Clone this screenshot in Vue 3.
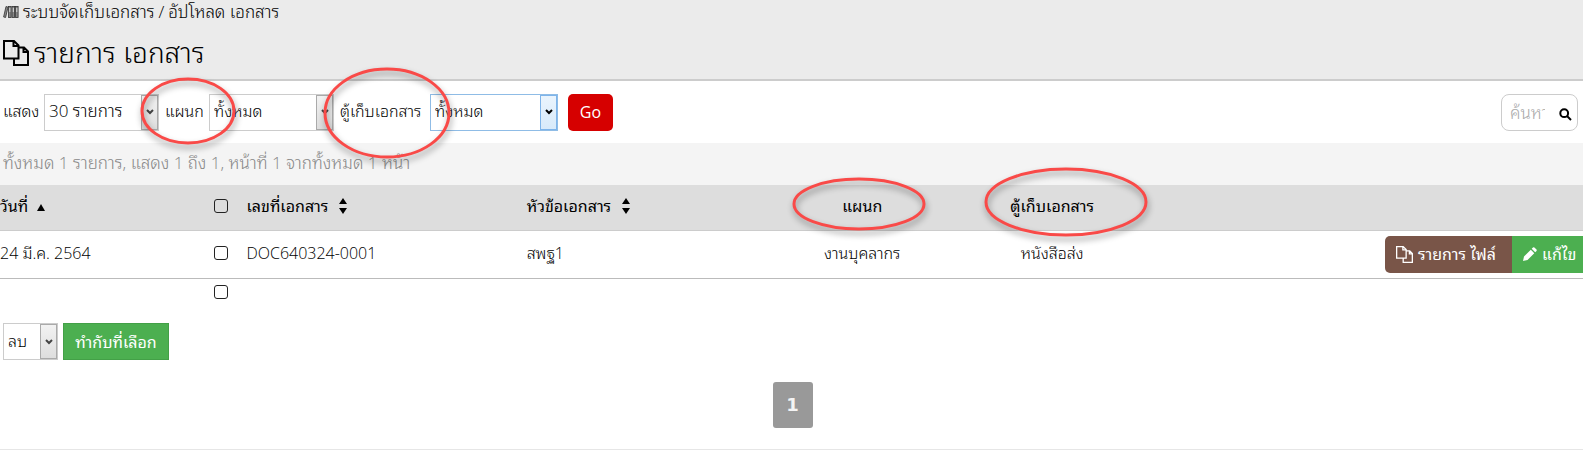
<script setup>
import { ref } from 'vue'

const pageSize = ref('30 รายการ')
const department = ref('ทั้งหมด')
const cabinet = ref('ทั้งหมด')
const action = ref('ลบ')
const query = ref('')
</script>

<template>
  <div class="page">
    <header class="head">
      <nav class="crumbs">
        <svg class="binders" viewBox="0 0 16 14" aria-hidden="true">
          <g fill="#888" stroke="#333" stroke-width="0.8">
            <path d="M3 1.5L5 2.2L2.6 12.5L.6 12Z" />
            <rect x="5.5" y="1.5" width="2.6" height="11" />
            <rect x="9" y="1.5" width="2.6" height="11" />
            <rect x="12.5" y="1.5" width="2.6" height="11" />
          </g>
          <path d="M6.8 3v4M10.3 3v4M13.8 3v4" stroke="#ddd" stroke-width="1" />
        </svg>
        <a href="#">ระบบจัดเก็บเอกสาร</a>
        <span>/</span>
        <a href="#">อัปโหลด เอกสาร</a>
      </nav>
      <h1 class="title">
        <svg class="files" viewBox="0 0 26 26" aria-hidden="true">
          <path d="M15.5 18.5H1V1H11L15.5 5.500V18.5ZM10.500 1V6H15.5M15.5 7.500H21L25 11.500V25H11V18.500M20.500 7.500V12H25" />
        </svg>
        <span>รายการ เอกสาร</span>
      </h1>
    </header>

    <form class="toolbar" @submit.prevent>
      <label class="w-show" for="size">แสดง</label>
      <span class="pick size">
        <select id="size" v-model="pageSize"><option>30 รายการ</option></select>
        <i><svg viewBox="0 0 8 6"><path d="M1 1L4 4L7 1" /></svg></i>
      </span>
      <label class="w-dept" for="dept">แผนก</label>
      <span class="pick dept">
        <select id="dept" v-model="department"><option>ทั้งหมด</option></select>
        <i><svg viewBox="0 0 8 6"><path d="M1 1L4 4L7 1" /></svg></i>
      </span>
      <label class="w-cab" for="cab">ตู้เก็บเอกสาร</label>
      <span class="pick cab active">
        <select id="cab" v-model="cabinet"><option>ทั้งหมด</option></select>
        <i><svg viewBox="0 0 8 6"><path d="M1 1L4 4L7 1" /></svg></i>
      </span>
      <button class="go" type="submit">Go</button>
      <span class="search">
        <input v-model="query" type="text" placeholder="ค้นหา" aria-label="ค้นหา" />
        <button type="button" aria-label="ค้นหา">
          <svg viewBox="0 0 13 13"><circle cx="5.200" cy="5.200" r="3.900" /><path d="M8 8L12 12" /></svg>
        </button>
      </span>
    </form>

    <p class="summary">ทั้งหมด 1 รายการ, แสดง 1 ถึง 1, หน้าที่ 1 จากทั้งหมด 1 หน้า</p>

    <table class="list">
      <colgroup>
        <col class="c-date" /><col class="c-check" /><col class="c-no" /><col class="c-topic" />
        <col class="c-dept" /><col class="c-cab" /><col />
      </colgroup>
      <thead>
        <tr>
          <th class="first">วันที่ <svg class="up" viewBox="0 0 8 8"><path d="M4 0L8 7H0Z" /></svg></th>
          <th class="mid"><input type="checkbox" aria-label="เลือก" /></th>
          <th><span class="sortable">เลขที่เอกสาร <svg class="sort" viewBox="0 0 8 16"><path d="M4 0L8 6H0ZM4 16L8 10H0Z" /></svg></span></th>
          <th><span class="sortable">หัวข้อเอกสาร <svg class="sort" viewBox="0 0 8 16"><path d="M4 0L8 6H0ZM4 16L8 10H0Z" /></svg></span></th>
          <th class="mid">แผนก</th>
          <th class="mid">ตู้เก็บเอกสาร</th>
          <th></th>
        </tr>
      </thead>
      <tbody>
        <tr>
          <td class="first">24 มี.ค. 2564</td>
          <td class="mid"><input type="checkbox" aria-label="เลือก" /></td>
          <td>DOC640324-0001</td>
          <td>สพฐ1</td>
          <td class="mid">งานบุคลากร</td>
          <td class="mid">หนังสือส่ง</td>
          <td class="acts">
            <div class="group">
              <a class="brown" href="#">
                <svg class="files" viewBox="0 0 26 26" aria-hidden="true">
                  <path d="M15.5 18.5H1V1H11L15.5 5.500V18.5ZM10.500 1V6H15.5M15.5 7.500H21L25 11.500V25H11V18.500M20.500 7.500V12H25" />
                </svg>
                <span>รายการ ไฟล์</span>
              </a>
              <a class="green" href="#">
                <svg class="pencil" viewBox="0 0 14 14" aria-hidden="true">
                  <path d="M0 14L1 9.500L7.800 2.700L11.300 6.200L4.500 13ZM8.700 1.800L10 .5Q10.700 0 11.400 .5L13.500 2.600Q14 3.300 13.500 4L12.200 5.300Z" />
                </svg>
                <span>แก้ไข</span>
              </a>
            </div>
          </td>
        </tr>
      </tbody>
      <tfoot>
        <tr>
          <td></td>
          <td class="mid"><input type="checkbox" aria-label="เลือก" /></td>
          <td colspan="5"></td>
        </tr>
      </tfoot>
    </table>

    <form class="bulk" @submit.prevent>
      <span class="pick act">
        <select v-model="action" aria-label="ทำกับที่เลือก"><option>ลบ</option></select>
        <i><svg viewBox="0 0 8 6"><path d="M1 1L4 4L7 1" /></svg></i>
      </span>
      <button type="submit">ทำกับที่เลือก</button>
    </form>

    <nav class="pager"><a href="#">1</a></nav>

    <svg class="marks" width="1200" height="260" aria-hidden="true">
      <ellipse cx="188" cy="111" rx="46" ry="32" />
      <ellipse cx="387" cy="113" rx="62" ry="44" />
      <ellipse cx="859" cy="204" rx="65" ry="25" />
      <ellipse cx="1066" cy="202" rx="80" ry="33" />
    </svg>
  </div>
</template>

<style>
body {
  margin: 0;
  background: #fff;
}
</style>

<style scoped>
.page {
  position: relative;
  overflow: hidden;
  border-bottom: 1px solid #e6e6e6;
  font: 300 16px/24px "Open Sans", "Noto Sans Thai Looped", "Noto Looped Thai", Loma, Garuda, "Noto Sans Thai", "Noto Sans", sans-serif;
  color: #000;
}
.page * {
  box-sizing: border-box;
}
a {
  color: inherit;
  text-decoration: none;
}
select,
input,
button {
  font: inherit;
  color: inherit;
}
.head {
  background: #ebebeb;
  border-bottom: 2px solid #ccc;
  padding: 0 3px 10px;
}
.crumbs {
  display: flex;
  align-items: center;
  gap: 4px;
  height: 24px;
  font-size: 17px;
}
.binders {
  width: 16px;
  height: 14px;
}
.title {
  display: flex;
  align-items: center;
  gap: 5px;
  height: 45px;
  padding-top: 12px;
  margin: 0;
  font-size: 28px;
  font-weight: 300;
  line-height: 33px;
}
.files {
  width: 26px;
  height: 26px;
  flex: none;
  fill: none;
  stroke: currentColor;
  stroke-width: 2;
}
.toolbar {
  display: flex;
  align-items: center;
  height: 62px;
  padding: 0 5px 0 3px;
  white-space: nowrap;
}
.toolbar label {
  padding-bottom: 2px;
}
.w-show {
  width: 41px;
}
.toolbar .w-dept {
  width: 50px;
  padding-left: 6px;
}
.toolbar .w-cab {
  width: 96px;
  padding-left: 6px;
}
.pick {
  position: relative;
  display: flex;
  height: 37px;
  border: 1px solid #ccc;
  background: #fff;
}
.pick select {
  appearance: none;
  flex: 1;
  width: 100%;
  border: 0;
  background: none;
  padding: 0 4px 2px;
  outline: 0;
}
.pick i {
  position: absolute;
  top: 0;
  right: 0;
  bottom: 0;
  width: 17px;
  display: grid;
  place-items: center;
  border: 1px solid #aaa;
  background: linear-gradient(#f2f2f2, #dedede);
  pointer-events: none;
}
.pick i svg {
  width: 8px;
  height: 6px;
  fill: none;
  stroke: #444;
  stroke-width: 2;
}
.size {
  width: 115px;
}
.size select {
  font-size: 17px;
}
.dept {
  width: 125px;
}
.cab {
  width: 128px;
}
.active {
  border-color: #8fbce6;
}
.active i {
  border-color: #7eb4ea;
  background: linear-gradient(#eaf4fd, #d8eafa);
}
.active i svg {
  stroke: #000;
}
.go {
  width: 45px;
  height: 37px;
  margin-left: 10px;
  padding: 0;
  border: 0;
  border-radius: 5px;
  background: #d60000;
  color: #fff;
  font-weight: 400;
}
.search {
  display: flex;
  align-items: center;
  width: 77px;
  height: 37px;
  margin-left: auto;
  border: 1px solid #ccc;
  border-radius: 8px;
}
.search input {
  width: 35px;
  height: 35px;
  margin-left: 8px;
  padding: 0;
  border: 0;
  outline: 0;
  background: none;
  font-size: 17px;
}
.search input::placeholder {
  color: #aaa;
}
.search button {
  display: grid;
  place-items: center;
  width: 33px;
  height: 35px;
  padding: 4px 0 0 8px;
  border: 0;
  background: none;
}
.search svg {
  width: 13px;
  height: 13px;
  fill: none;
  stroke: #000;
  stroke-width: 2;
}
.summary {
  margin: 0;
  padding: 8px 3px 10px;
  background: #f4f4f4;
  color: #888;
  font-size: 17px;
}
.list {
  width: 100%;
  table-layout: fixed;
  border-collapse: collapse;
  white-space: nowrap;
}
.c-date {
  width: 13%;
}
.c-check {
  width: 2%;
}
.c-no {
  width: 17.7%;
}
.c-topic {
  width: 15.3%;
}
.c-dept {
  width: 13%;
}
.c-cab {
  width: 11%;
}
th,
td {
  padding: 0 0 2px 9px;
  text-align: left;
}
.first {
  padding-left: 0;
}
.mid {
  padding-left: 0;
  padding-right: 1px;
  text-align: center;
}
td.acts {
  padding: 0;
}
thead tr {
  height: 45px;
  background: #ddd;
  border-bottom: 1px solid #ccc;
}
tbody tr {
  height: 48px;
  border-bottom: 1px solid #bbb;
}
tfoot tr {
  height: 28px;
}
tfoot td {
  padding-bottom: 0;
}
th {
  font-weight: 400;
}
.up {
  width: 8px;
  height: 8px;
  margin-left: 5px;
}
.sortable {
  display: flex;
  align-items: center;
  gap: 11px;
}
.sort {
  width: 8px;
  height: 16px;
}
input[type="checkbox"] {
  appearance: none;
  display: block;
  width: 14px;
  height: 14px;
  margin: 0 auto;
  border: 1px solid #222;
  border-radius: 3px;
}
.group {
  display: flex;
  justify-content: flex-end;
  color: #fff;
  font-weight: 400;
}
.group a {
  display: flex;
  align-items: center;
  gap: 5px;
  height: 37px;
  padding: 0 11px;
}
.group .brown {
  width: 127px;
  border-radius: 5px 0 0 5px;
  background: #795548;
}
.group .green {
  width: 71px;
  padding-right: 0;
  background: #4caf50;
}
.group .files {
  width: 17px;
  height: 17px;
}
.pencil {
  width: 14px;
  height: 14px;
  flex: none;
  fill: #fff;
}
.bulk {
  display: flex;
  gap: 5px;
  padding: 17px 3px 22px;
}
.act {
  width: 55px;
}
.bulk button {
  width: 106px;
  height: 37px;
  padding: 0;
  border: 1px solid #43a047;
  background: #4caf50;
  color: #fff;
  font-weight: 400;
  white-space: nowrap;
}
.pager {
  display: flex;
  justify-content: center;
  padding: 0 0 21px 2px;
}
.pager a {
  width: 40px;
  height: 46px;
  border-radius: 3px;
  background: #999;
  color: #f4f4f4;
  font: bold 18px/46px "DejaVu Sans", sans-serif;
  text-align: center;
}
.marks {
  position: absolute;
  top: 0;
  left: 0;
  pointer-events: none;
}
.marks ellipse {
  fill: none;
  stroke: #f94a48;
  stroke-width: 3;
  filter: drop-shadow(1px 4px 3px rgba(0, 0, 0, 0.4));
}
</style>
